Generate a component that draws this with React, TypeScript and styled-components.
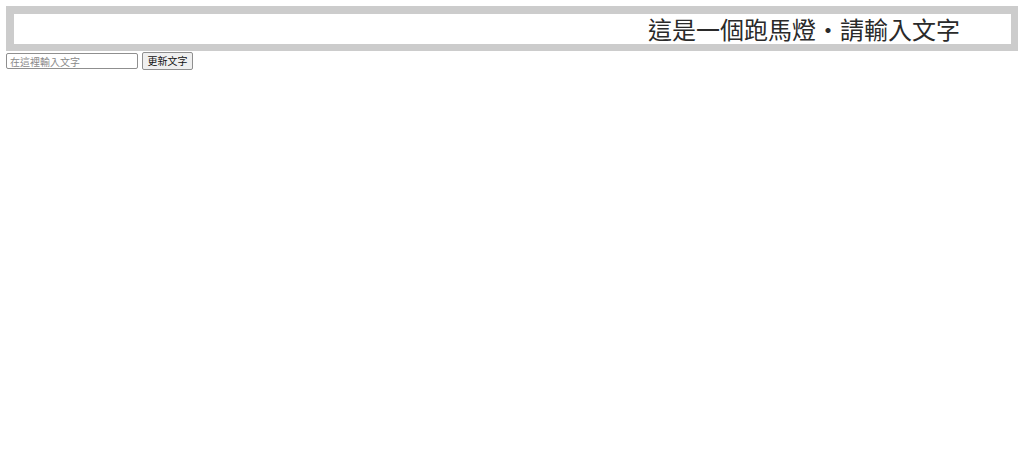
import React, { useState } from "react";
import styled, { createGlobalStyle } from "styled-components";

const Global = createGlobalStyle`
  html, body { margin: 0; padding: 0; background: #ffffff; }
  body {
    font-family: "Noto Sans CJK TC", "Noto Sans", sans-serif;
    color: #000;
  }
`;

const Page = styled.div`
  padding: 6px 6px 0 6px;
  display: flex;
  flex-direction: column;
  gap: 1px;
`;

const MarqueeBox = styled.div`
  box-sizing: border-box;
  width: 1012px;
  height: 45px;
  border-style: solid;
  border-color: #cccccc;
  border-width: 8px 7px 7px 8px;
  overflow: hidden;
  white-space: nowrap;
  background: #ffffff;
`;

const MarqueeText = styled.div`
  display: inline-block;
  font-family: "Noto Sans CJK TC", sans-serif;
  font-size: 24px;
  line-height: 30px;
  color: #2a2a2a;
  letter-spacing: 0;
`;

const Controls = styled.div`
  display: flex;
  align-items: center;
  gap: 4px;
  height: 18px;
`;

const TextInput = styled.input`
  box-sizing: border-box;
  width: 132px;
  height: 16px;
  margin: 0;
  padding: 0 3px;
  border: 1px solid #8f8f8f;
  border-radius: 2px;
  font-family: "Noto Sans CJK TC", sans-serif;
  font-size: 10px;
  line-height: 14px;
  color: #000;
  outline: none;
  &::placeholder {
    color: #8a8a8a;
  }
`;

const UpdateButton = styled.button`
  box-sizing: border-box;
  width: 51px;
  height: 18px;
  margin: 0;
  padding: 0;
  border: 1px solid #8f8f8f;
  border-radius: 2px;
  background: #efefef;
  font-family: "Noto Sans CJK TC", sans-serif;
  font-size: 10px;
  line-height: 14px;
  white-space: nowrap;
  color: #111;
  cursor: pointer;
  display: flex;
  align-items: center;
  justify-content: center;
`;

export default function App() {
  const [text, setText] = useState("這是一個跑馬燈‧請輸入文字");
  const [draft, setDraft] = useState("");
  const scroll = 634;
  return (
    <>
      <Global />
      <Page>
        <MarqueeBox>
          <MarqueeText style={{ transform: `translateX(${scroll}px)` }}>{text}</MarqueeText>
        </MarqueeBox>
        <Controls>
          <TextInput
            placeholder="在這裡輸入文字"
            value={draft}
            onChange={(e) => setDraft(e.target.value)}
          />
          <UpdateButton onClick={() => draft && setText(draft)}>更新文字</UpdateButton>
        </Controls>
      </Page>
    </>
  );
}
